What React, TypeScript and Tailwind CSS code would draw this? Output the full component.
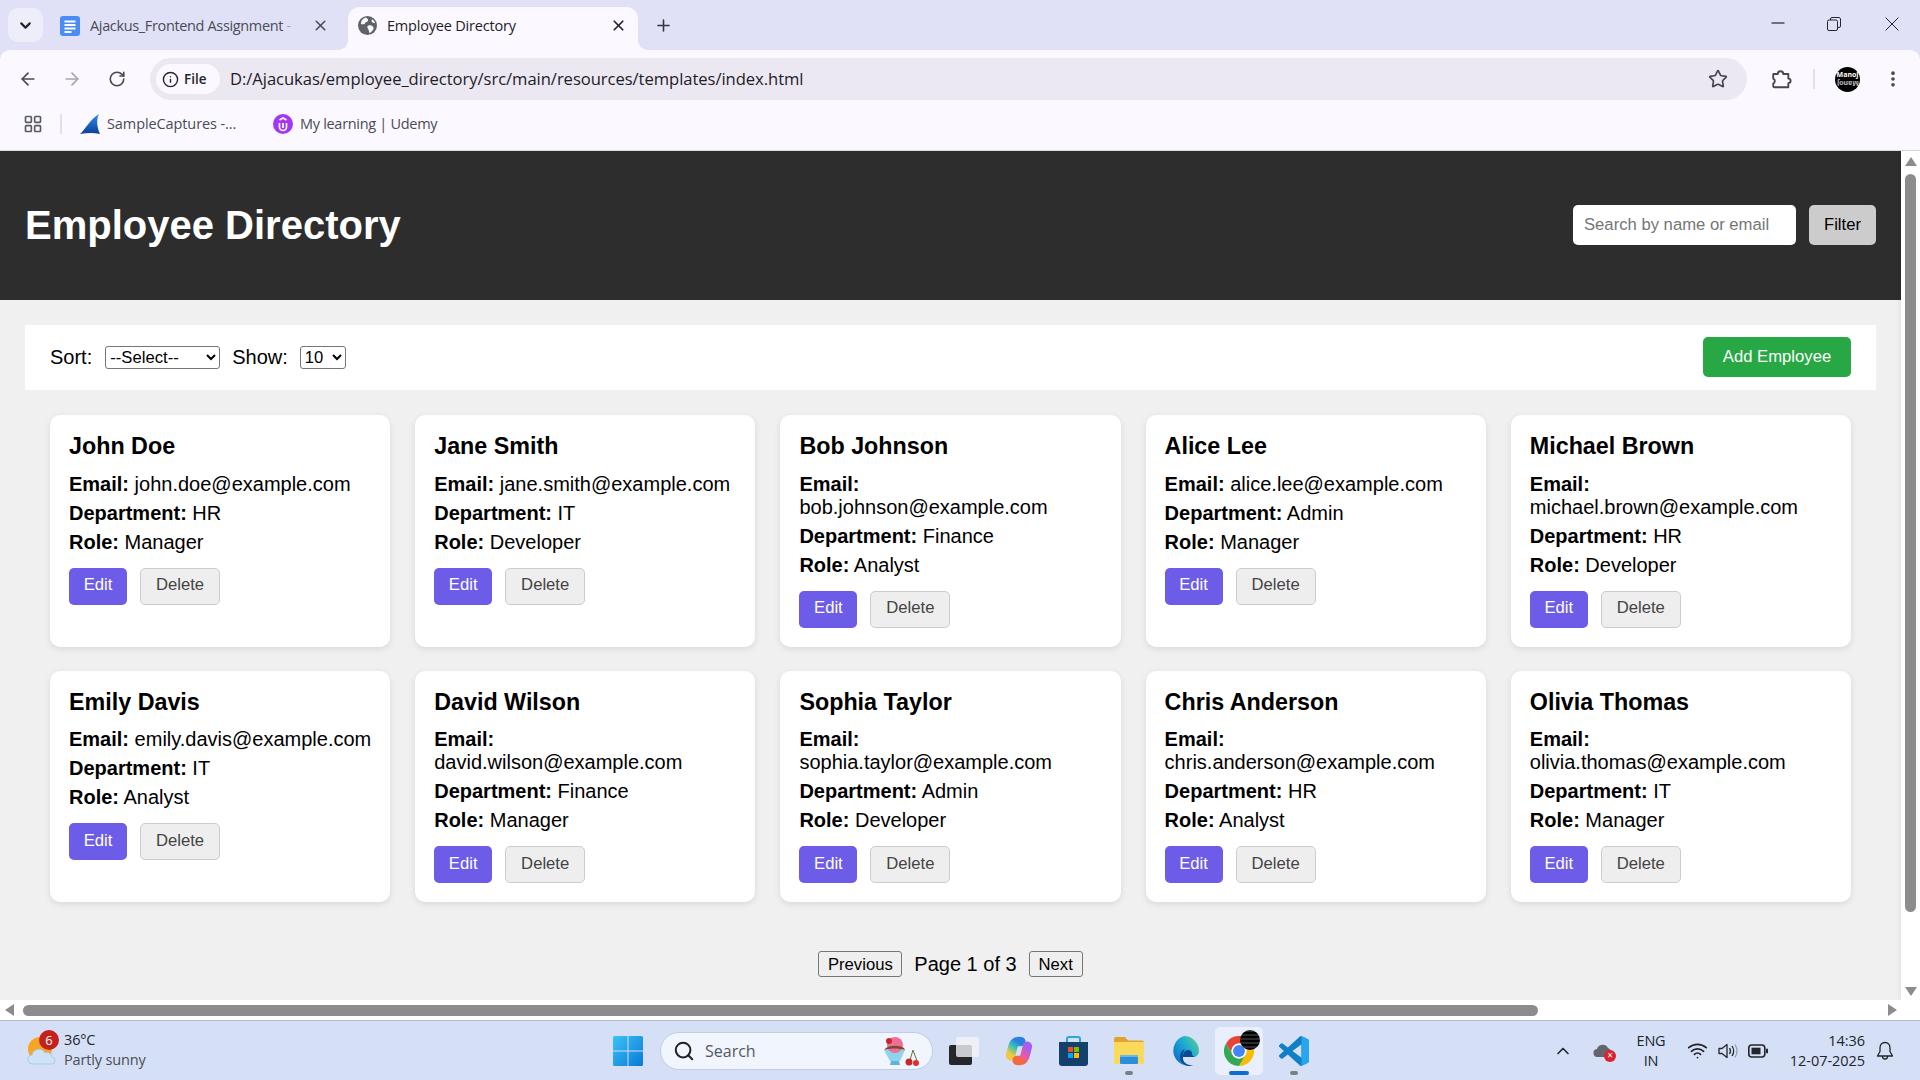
import React from 'react';
import {
  ArrowLeft, ArrowRight, ChevronDown, ChevronUp, EllipsisVertical, Info, LayoutGrid,
  Plus, RotateCw, Search, Star, Wifi, X,
} from 'lucide-react';

const EMPLOYEES = [
  { name: 'John Doe', email: 'john.doe@example.com', department: 'HR', role: 'Manager' },
  { name: 'Jane Smith', email: 'jane.smith@example.com', department: 'IT', role: 'Developer' },
  { name: 'Bob Johnson', email: 'bob.johnson@example.com', department: 'Finance', role: 'Analyst' },
  { name: 'Alice Lee', email: 'alice.lee@example.com', department: 'Admin', role: 'Manager' },
  { name: 'Michael Brown', email: 'michael.brown@example.com', department: 'HR', role: 'Developer' },
  { name: 'Emily Davis', email: 'emily.davis@example.com', department: 'IT', role: 'Analyst' },
  { name: 'David Wilson', email: 'david.wilson@example.com', department: 'Finance', role: 'Manager' },
  { name: 'Sophia Taylor', email: 'sophia.taylor@example.com', department: 'Admin', role: 'Developer' },
  { name: 'Chris Anderson', email: 'chris.anderson@example.com', department: 'HR', role: 'Analyst' },
  { name: 'Olivia Thomas', email: 'olivia.thomas@example.com', department: 'IT', role: 'Manager' },
];

const BrowserChrome = () => (
  <div className="h-[151px] shrink-0 bg-[#e0e1f7] font-['Open_Sans',sans-serif] border-b border-[#d9d9e3]">
    {/* tab strip */}
    <div className="h-[50px] flex items-end relative">
      <div className="absolute left-[8px] top-[8px] w-[35px] h-[34px] rounded-[10px] bg-[#eeeefb] flex items-center justify-center">
        <ChevronDown size={17} strokeWidth={3} className="text-[#22232b]" />
      </div>
      <div className="ml-[60px] w-[288px] h-[43px] flex items-center pb-[6px] text-[14.5px] text-[#4a4b55]">
        <svg width="20" height="20" viewBox="0 0 20 20" className="shrink-0">
          <rect width="20" height="20" rx="3" fill="#4a8cf6" />
          <path d="M4.500 5.500h11M4.500 9h11M4.500 12.500h11M4.500 16h7" stroke="#fff" strokeWidth="1.800" />
        </svg>
        <span className="ml-[10px] w-[208px] shrink-0 overflow-hidden whitespace-nowrap tracking-[-0.35px]">
          Ajackus_Frontend Assignment <span className="opacity-40">-</span>
        </span>
        <X size={17} strokeWidth={2.2} className="ml-[14px] text-[#4b4c56]" />
      </div>
      <div className="relative w-[290px] h-[43px] bg-[#fbf9ff] rounded-t-[12px] flex items-center pb-[6px] pl-[10px] text-[14.5px] text-[#1f2027] before:absolute before:bottom-0 before:-left-[10px] before:w-[10px] before:h-[10px] before:bg-[radial-gradient(circle_at_0_0,transparent_10px,#fbf9ff_10px)] after:absolute after:bottom-0 after:-right-[10px] after:w-[10px] after:h-[10px] after:bg-[radial-gradient(circle_at_100%_0,transparent_10px,#fbf9ff_10px)]">
        <svg width="19" height="19" viewBox="0 0 20 20">
          <circle cx="10" cy="10" r="10" fill="#5f6368" />
          <path d="M8 1.500c2 1 3 2 2.500 3.500S8 6 7.500 7.500 5 9 3 8.500C3 5 5 2.500 8 1.500zM11 10c2-.5 4 0 5 1.500s0 3-1 4-1.500 2-3 2.500c-.5-2-.5-3-1.500-4.500S9.500 10.500 11 10zM15 3.500c1.500 1 2.500 2.500 3 4-1.500 0-3-.5-3.500-1.500s-.5-1.500.5-2.500z" fill="#fbf9ff" />
        </svg>
        <span className="ml-[10px] w-[223px] tracking-[-0.2px]">Employee Directory</span>
        <X size={17} strokeWidth={2.4} className="text-[#26272e]" />
      </div>
      <Plus size={19} strokeWidth={2} className="ml-[16px] mb-[15px] text-[#34353d]" />
      <div className="ml-auto self-start mt-[17px] flex items-center text-[#25262c]">
        <svg width="14" height="14" viewBox="0 0 14 14"><path d="M0.500 6h13" stroke="currentColor" strokeWidth="1.200" /></svg>
        <svg width="14" height="14" viewBox="0 0 14 14" className="ml-[42px]" fill="none" stroke="currentColor"><rect x="0.500" y="3" width="10" height="10.500" rx="1.500" /><path d="M3.500 3V2a1.500 1.500 0 0 1 1.500-1.500h6A2 2 0 0 1 13.500 3v6a1.500 1.500 0 0 1-1.500 1.500h-1" /></svg>
        <svg width="14" height="14" viewBox="0 0 14 14" className="ml-[44px] mr-[21px]" fill="none" stroke="currentColor"><path d="M.5.500l13 13M13.500.500l-13 13" /></svg>
      </div>
    </div>
    <div className="h-[100px] bg-[#fbf9ff] rounded-t-[10px] flex flex-col">
      {/* toolbar */}
      <div className="h-[50px] pt-[8px] flex items-center">
        <ArrowLeft size={20} strokeWidth={2} className="ml-[18px] text-[#484953]" />
        <ArrowRight size={20} strokeWidth={2} className="ml-[24px] text-[#a5a5ad]" />
        <RotateCw size={18} strokeWidth={2.2} className="ml-[26px] text-[#484953]" />
        <div className="ml-[24px] w-[1597px] h-[42px] rounded-full bg-[#ebe8f2] flex items-center pl-[6px]">
          <div className="w-[64px] h-[30px] rounded-full bg-[#fbf9ff] flex items-center pl-[6px] text-[13.500px] font-semibold text-[#25262c]">
            <Info size={17} strokeWidth={2} />
            <span className="ml-[5px]">File</span>
          </div>
          <span className="ml-[10px] text-[16.600px] tracking-[-0.05px] text-[#1f2027]">D:/Ajacukas/employee_directory/src/main/resources/templates/index.html</span>
          <Star size={20} strokeWidth={2} className="ml-auto mr-[19px] text-[#45464f]" />
        </div>
        <svg width="22" height="22" viewBox="0 0 24 24" className="ml-[23px] text-[#45464f]" fill="none" stroke="currentColor" strokeWidth="2" strokeLinejoin="round">
          <path d="M4 6.500h4.500a3 3 0 0 1 6 0H20v5a2.500 2.500 0 0 1 0 5v4.500H4.500a1 1 0 0 1-1-1v-3a3 3 0 0 0 0-5.500V7a.5.5 0 0 1 .5-.5z" />
        </svg>
        <div className="ml-[21px] w-[2px] h-[20px] bg-[#dfe0f6]" />
        <div className="ml-[20px] w-[25px] h-[25px] rounded-full bg-black flex flex-col items-center justify-center text-[7px] leading-[8px] font-bold text-white">
          <span>Manoj</span>
          <span className="rotate-180 opacity-70">Manoj</span>
        </div>
        <EllipsisVertical size={20} strokeWidth={2.4} className="ml-[23px] text-[#45464f]" />
      </div>
      {/* bookmarks */}
      <div className="h-[48px] flex items-center text-[14.500px] text-[#4a4b55] tracking-[-0.3px]">
        <LayoutGrid size={20} strokeWidth={2} className="ml-[23px] text-[#5a5b64]" />
        <div className="ml-[17px] w-[2px] h-[20px] bg-[#dfe0f6]" />
        <svg width="20" height="20" viewBox="0 0 20 20" className="ml-[18px]">
          <defs>
            <linearGradient id="fin" x1="0" y1="0" x2="0" y2="1">
              <stop offset="0" stopColor="#2f8cf0" />
              <stop offset="1" stopColor="#0b3f94" />
            </linearGradient>
          </defs>
          <path d="M0 20C6 15 9 6 19 0c-3 6-2 13 1 20-6-1.500-13-1.500-20 0z" fill="url(#fin)" />
        </svg>
        <span className="ml-[7px] w-[166px] tracking-[-0.1px]">SampleCaptures -...</span>
        <svg width="20" height="20" viewBox="0 0 20 20">
          <circle cx="10" cy="10" r="10" fill="#a435f0" />
          <path d="M6.500 9v4a3.500 3.500 0 0 0 7 0V9M10 9v5M6.500 6l3.500-2 3.500 2" fill="none" stroke="#fff" strokeWidth="1.700" />
        </svg>
        <span className="ml-[7px]">My learning | Udemy</span>
      </div>
    </div>
  </div>
);

const EmployeeCard = ({ employee }: { employee: (typeof EMPLOYEES)[number] }) => (
  <div className="bg-white rounded-[10px] pt-[18px] pb-[19px] pl-[19px] pr-[15px] shadow-[0_2px_6px_rgba(0,0,0,0.1)]">
    <h3 className="text-[23.300px] leading-[26px] font-bold mb-[13.500px]">{employee.name}</h3>
    <p className="mb-[6px]"><strong>Email:</strong> {employee.email}</p>
    <p className="mb-[6px]"><strong>Department:</strong> {employee.department}</p>
    <p className="mb-[14px]"><strong>Role:</strong> {employee.role}</p>
    <div className="flex gap-[13px]">
      <button className="w-[58px] h-[37px] rounded-[5px] bg-[#6c5ce7] text-white text-[16.670px] pb-[3px]">Edit</button>
      <button className="w-[80px] h-[37px] rounded-[5px] bg-[#eeeeee] border border-[#cccccc] text-[#444444] text-[16.670px] pb-[3px]">Delete</button>
    </div>
  </div>
);

const PageContent = () => (
  <div className="flex-1 min-w-0 bg-[#f0f0f0] text-[20px] leading-[23px] text-black font-['Liberation_Sans',Arial,sans-serif] overflow-hidden">
    <header className="h-[149px] bg-[#2d2d2d] flex items-center justify-between px-[25px] pb-[2px]">
      <h1 className="text-[40px] leading-[46px] font-bold text-white">Employee Directory</h1>
      <div className="flex items-center gap-[13px]">
        <input
          placeholder="Search by name or email"
          className="w-[223px] h-[40px] rounded-[5px] bg-white px-[11px] text-[16.670px] placeholder:text-[#757575] outline-none"
        />
        <button className="w-[67px] h-[40px] rounded-[5px] bg-[#cccccc] text-[16.670px] text-black">Filter</button>
      </div>
    </header>
    <div className="mx-[25px] mt-[25px] h-[65px] bg-white flex items-center px-[25px]">
      <span>Sort:</span>
      <select className="ml-[13px] w-[115px] h-[23px] border border-[#767676] rounded-[3px] text-[16.670px] leading-[19px] bg-white">
        <option>--Select--</option>
      </select>
      <span className="ml-[12px]">Show:</span>
      <select className="ml-[12px] w-[46px] h-[23px] border border-[#767676] rounded-[3px] text-[16.670px] leading-[19px] bg-white">
        <option>10</option>
      </select>
      <button className="ml-auto mb-[1px] w-[148px] h-[40px] rounded-[5px] bg-[#28a745] text-white text-[16.670px] pb-[2px]">Add Employee</button>
    </div>
    <div className="mx-[50px] mt-[25px] grid grid-cols-5 gap-x-[25px] gap-y-[24px]">
      {EMPLOYEES.map((employee) => (
        <EmployeeCard key={employee.email} employee={employee} />
      ))}
    </div>
    <div className="mt-[49px] flex items-center justify-center gap-[12px]">
      <button className="w-[84px] h-[26px] border border-[#767676] rounded-[3px] bg-[#efefef] text-[16.670px] leading-[19px]">Previous</button>
      <span>Page 1 of 3</span>
      <button className="w-[54px] h-[26px] border border-[#767676] rounded-[3px] bg-[#efefef] text-[16.670px] leading-[19px]">Next</button>
    </div>
  </div>
);

const VerticalScrollbar = () => (
  <div className="w-[19px] shrink-0 bg-white flex flex-col items-center pt-[6px] pb-[4px] shadow-[-2px_0_4px_rgba(0,0,0,0.05)]">
    <div className="w-0 h-0 border-x-[6px] border-x-transparent border-b-[9px] border-b-[#8c8c8c]" />
    <div className="w-[11px] h-[738px] mt-[8px] rounded-full bg-[#8c8c8c]" />
    <div className="mt-auto w-0 h-0 border-x-[6px] border-x-transparent border-t-[9px] border-t-[#8c8c8c]" />
  </div>
);

const HorizontalScrollbar = () => (
  <div className="h-[20px] shrink-0 bg-white flex items-center pl-[5px] pr-[23px]">
    <div className="w-0 h-0 border-y-[6px] border-y-transparent border-r-[9px] border-r-[#8c8c8c]" />
    <div className="ml-[9px] w-[1515px] h-[11px] rounded-full bg-[#8c8c8c]" />
    <div className="ml-auto w-0 h-0 border-y-[6px] border-y-transparent border-l-[9px] border-l-[#8c8c8c]" />
  </div>
);

const Dot = () => <div className="absolute bottom-[5px] left-1/2 -ml-[4px] w-[8px] h-[4px] rounded-full bg-[#7b7f88]" />;

const Taskbar = () => (
  <div className="h-[60px] shrink-0 bg-[#d5e0f6] border-t border-[#b4bccb] flex items-center font-['Open_Sans',sans-serif] text-[#23252b]">
    {/* weather */}
    <div className="relative ml-[27px] w-[29px] h-[30px] shrink-0">
      <svg width="29" height="30" viewBox="0 0 29 30">
        <circle cx="13" cy="13" r="12" fill="#f5a623" />
        <path d="M6 28a4.500 4.500 0 0 1-1-9 7 7 0 0 1 13-2 5 5 0 0 1 7 4 3.500 3.500 0 0 1-1 7z" fill="#cfe2f7" stroke="#a9c9ea" />
      </svg>
      <div className="absolute left-[12px] -top-[6px] w-[20px] h-[20px] rounded-full bg-[#c4211c] text-white text-[13px] leading-[20px] text-center">6</div>
    </div>
    <div className="ml-[8px] w-[549px] shrink-0 text-[14.500px] leading-[20px] tracking-[-0.15px] pb-[1px]">
      <div>36°C</div>
      <div className="text-[#4a4d55]">Partly sunny</div>
    </div>
    {/* windows logo */}
    <svg width="30" height="30" viewBox="0 0 30 30" className="shrink-0">
      <defs>
        <linearGradient id="win" x1="0" y1="0" x2="1" y2="1">
          <stop offset="0" stopColor="#3bc4f7" />
          <stop offset="1" stopColor="#0a78d6" />
        </linearGradient>
      </defs>
      <path d="M0 1.500A1.500 1.500 0 0 1 1.500 0h13v14.500H0zM15.500 0h13A1.500 1.500 0 0 1 30 1.500v13H15.500zM0 15.500h14.500V30h-13A1.500 1.500 0 0 1 0 28.500zM15.500 15.500H30v13a1.500 1.500 0 0 1-1.500 1.500h-13z" fill="url(#win)" />
    </svg>
    {/* search */}
    <div className="ml-[17px] w-[273px] h-[38px] shrink-0 rounded-full bg-[#f1f5fe] border border-[#c3cce0] flex items-center pl-[12px] text-[16px] text-[#555860]">
      <Search size={22} strokeWidth={2.200} className="text-[#1f2126]" />
      <span className="ml-[10px]">Search</span>
      <svg width="36" height="32" viewBox="0 0 36 32" className="ml-auto mr-[13px]">
        <path d="M1 15c6-3 16-3 21 0l-5 11h-10z" fill="#8fd3ee" />
        <path d="M8 26h8l1 4H7z" fill="#5ab4dc" />
        <circle cx="12" cy="10" r="8" fill="#ee6f95" />
        <path d="M3 13c5-3 13-3 18 0l1 2c-6-2-15-2-21 0z" fill="#7a4a2c" />
        <circle cx="6" cy="6" r="3" fill="#c9262b" />
        <path d="M30 15l-3 10M30 15l4 11" stroke="#5f7a3a" fill="none" />
        <circle cx="26" cy="27" r="3.500" fill="#c9262b" />
        <circle cx="33" cy="28" r="3" fill="#d8302f" />
      </svg>
    </div>
    {/* task view */}
    <svg width="30" height="28" viewBox="0 0 30 28" className="ml-[16px] shrink-0">
      <rect x="0" y="8" width="23" height="20" rx="2" fill="#26272a" />
      <rect x="7" y="0" width="23" height="20" rx="2" fill="#f3f4f6" fillOpacity="0.8" />
    </svg>
    {/* copilot */}
    <svg width="30" height="30" viewBox="0 0 32 32" className="ml-[25px] shrink-0" fill="none" strokeWidth="10" strokeLinecap="round">
      <defs>
        <linearGradient id="cop1" x1="0.700" y1="0" x2="0.200" y2="1">
          <stop offset="0" stopColor="#2a7fe0" />
          <stop offset="0.450" stopColor="#35c4b8" />
          <stop offset="1" stopColor="#f2c83c" />
        </linearGradient>
        <linearGradient id="cop2" x1="0.800" y1="0" x2="0.200" y2="1">
          <stop offset="0" stopColor="#a85df0" />
          <stop offset="0.600" stopColor="#ee5a9a" />
          <stop offset="1" stopColor="#f26b3c" />
        </linearGradient>
      </defs>
      <path d="M18 6C11 5 10 9 9 13L7 21" stroke="url(#cop1)" />
      <path d="M14 26C21 27 22 23 23 19L25 11" stroke="url(#cop2)" />
    </svg>
    {/* store */}
    <svg width="29" height="30" viewBox="0 0 29 30" className="ml-[25px] shrink-0">
      <path d="M8 7V3a2 2 0 0 1 2-2h9a2 2 0 0 1 2 2v4" fill="none" stroke="#2aa7e0" strokeWidth="2" />
      <path d="M0 6h29v21a3 3 0 0 1-3 3H3a3 3 0 0 1-3-3z" fill="#14406c" />
      <rect x="9" y="11" width="5" height="5" fill="#f25022" />
      <rect x="15" y="11" width="5" height="5" fill="#7fba00" />
      <rect x="9" y="17" width="5" height="5" fill="#00a4ef" />
      <rect x="15" y="17" width="5" height="5" fill="#ffb900" />
    </svg>
    {/* explorer */}
    <div className="relative ml-[19px] w-[44px] h-[59px] shrink-0 flex items-center justify-center">
      <svg width="30" height="27" viewBox="0 0 30 27">
        <path d="M0 2a2 2 0 0 1 2-2h9l3 3.500h14a2 2 0 0 1 2 2V9H0z" fill="#e0a526" />
        <path d="M0 5h30v22H0z" fill="#fbd95c" />
        <rect x="6" y="18" width="18" height="9" rx="1" fill="#2c8fd9" />
        <rect x="6" y="18" width="18" height="2" fill="#63b8ee" />
      </svg>
      <Dot />
    </div>
    {/* edge */}
    <svg width="30" height="30" viewBox="0 0 30 30" className="ml-[18px] shrink-0">
      <defs>
        <linearGradient id="edge" x1="1" y1="0" x2="0" y2="0.800">
          <stop offset="0" stopColor="#5ed87c" />
          <stop offset="0.500" stopColor="#1ba9d8" />
          <stop offset="1" stopColor="#0f6cc0" />
        </linearGradient>
      </defs>
      <path d="M15 0a15 15 0 0 1 15 15c0 4-3 6-7 6h-9c-1 4 2 9 10 8a15 15 0 1 1-9-29z" fill="url(#edge)" />
      <path d="M14 21c0-4 2-7 5-7 3 0 4 2 4 4 0 2 2 3 4 3-3 0-13 0-13 0z" fill="#0d4a94" />
      <path d="M14 20c-1 5 3 10 10 9-6 3-14-2-13-9 0-3 2-6 5-7-1 1-2 4-2 7z" fill="#0c4f9c" />
    </svg>
    {/* chrome, active */}
    <div className="relative ml-[16px] w-[48px] h-[48px] shrink-0 rounded-[5px] bg-[#e9effc] flex items-center justify-center">
      <svg width="30" height="30" viewBox="0 0 48 48">
        <path d="M24 12h20.800A24 24 0 0 0 3.200 12l10.400 18A12 12 0 0 1 24 12z" fill="#ea4335" />
        <path d="M44.800 12H24a12 12 0 0 1 10.400 18L24 48a24 24 0 0 0 20.800-36z" fill="#fbbc04" />
        <path d="M3.200 12A24 24 0 0 0 24 48l10.400-18a12 12 0 0 1-20.800 0z" fill="#34a853" />
        <circle cx="24" cy="24" r="12" fill="#fff" />
        <circle cx="24" cy="24" r="9.500" fill="#4285f4" />
      </svg>
      <div className="absolute top-[3px] right-[3px] w-[20px] h-[20px] rounded-full bg-[repeating-linear-gradient(0deg,#000_0px,#000_2px,#555_3px,#000_4px)]" />
      <div className="absolute bottom-0 left-1/2 -ml-[10px] w-[20px] h-[4px] rounded-full bg-[#0b6fd1]" />
    </div>
    {/* vscode */}
    <div className="relative ml-[7px] w-[48px] h-[59px] shrink-0 flex items-center justify-center">
      <svg width="30" height="30" viewBox="0 0 100 100">
        <path d="M96.500 10.800 75.900.9a6.200 6.200 0 0 0-7.100 1.200L29.400 38.100 12.200 25.100a4.200 4.200 0 0 0-5.300.2L1.400 30.300a4.200 4.200 0 0 0 0 6.200L16.300 50 1.400 63.500a4.200 4.200 0 0 0 0 6.200l5.500 5a4.200 4.200 0 0 0 5.300.2l17.200-13 39.400 36a6.200 6.200 0 0 0 7.100 1.200l20.600-9.900a6.200 6.200 0 0 0 3.500-5.600V16.400a6.200 6.200 0 0 0-3.500-5.600zM75 72.700 45.100 50 75 27.300z" fill="#0f7fc7" />
        <path d="M68.800 2.100a6.200 6.200 0 0 1 7.100-1.200l20.600 9.900a6.200 6.200 0 0 1 3.500 5.600v67.200a6.200 6.200 0 0 1-3.500 5.600l-20.600 9.900a6.200 6.200 0 0 1-7.100-1.200c2.300 2.300 6.200.7 6.200-2.600V4.700c0-3.300-3.900-4.900-6.200-2.600z" fill="#27a5ee" />
      </svg>
      <Dot />
    </div>
    {/* tray */}
    <ChevronUp size={20} strokeWidth={2} className="ml-[235px] shrink-0" />
    <div className="relative ml-[20px] w-[22px] h-[18px] shrink-0">
      <svg width="20" height="16" viewBox="0 0 20 16"><path d="M5 15a4 4 0 0 1-1-8 6 6 0 0 1 11-1 5 5 0 0 1 1 9z" fill="#62656c" /></svg>
      <div className="absolute -right-[1px] -bottom-[2px] w-[12px] h-[12px] rounded-full bg-[#d9232e] text-white text-[10px] leading-[11px] text-center">×</div>
    </div>
    <div className="ml-[16px] w-[40px] shrink-0 text-center text-[14.500px] leading-[20px] tracking-[-0.2px]">
      <div>ENG</div>
      <div>IN</div>
    </div>
    <Wifi size={21} strokeWidth={2} className="ml-[16px] shrink-0" />
    <svg width="20" height="18" viewBox="0 0 20 18" className="ml-[10px] shrink-0" fill="none" stroke="currentColor" strokeWidth="1.300">
      <path d="M1 6.500h3L9 2.500v13L4 11.500H1z" strokeLinejoin="round" />
      <path d="M11.500 6c1.200 1.800 1.200 4.200 0 6M14 4c2 3 2 7 0 10" />
      <path d="M17 2.500c2.500 4 2.500 9 0 13" opacity="0.35" />
    </svg>
    <svg width="20" height="14" viewBox="0 0 20 14" className="ml-[10px] shrink-0">
      <rect x="0.800" y="1" width="16" height="12" rx="3" fill="none" stroke="currentColor" strokeWidth="1.600" />
      <rect x="3.500" y="3.700" width="9" height="6.600" fill="currentColor" />
      <rect x="18" y="4.500" width="2" height="5" rx="1" fill="currentColor" />
    </svg>
    <div className="w-[97px] shrink-0 text-right text-[14.500px] leading-[20px] tracking-[-0.05px]">
      <div>14:36</div>
      <div>12-07-2025</div>
    </div>
    <svg width="20" height="20" viewBox="0 0 20 20" className="ml-[10px] shrink-0" fill="none" stroke="currentColor" strokeWidth="1.300">
      <path d="M10 1.500c-3 0-5 2.300-5 5.500v3.500L2.500 15h15L15 10.500V7c0-3.200-2-5.500-5-5.500zM7.500 15.500a2.500 2.500 0 0 0 5 0" strokeLinejoin="round" />
    </svg>
  </div>
);

export default function App() {
  return (
    <div className="w-[1920px] h-[1080px] flex flex-col overflow-hidden">
      <BrowserChrome />
      <div className="h-[849px] flex min-h-0">
        <PageContent />
        <VerticalScrollbar />
      </div>
      <HorizontalScrollbar />
      <Taskbar />
    </div>
  );
}
